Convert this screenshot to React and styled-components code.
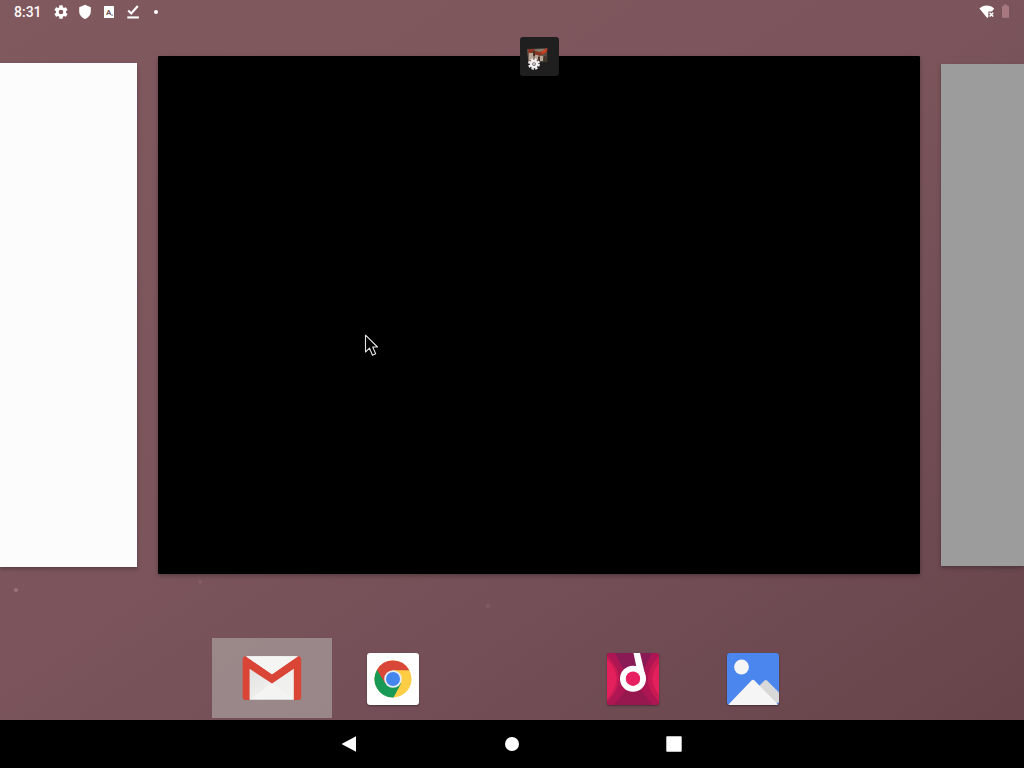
import React from 'react';
import styled, { createGlobalStyle } from 'styled-components';

const GlobalStyle = createGlobalStyle`
    * {
        box-sizing:border-box;
    }

    body {
        margin:0;
        overflow:hidden;
        font-family: Roboto, sans-serif;
    }

    svg {
        display:block;
        flex:none;
    }
`;

const Screen = styled.div`
    width:1024px;
    height:768px;
    display:flex;
    flex-direction:column;
    overflow:hidden;
    background:
        radial-gradient(circle at 16px 590px, rgba(160, 128, 136, 0.7) 0 1.5px, transparent 2.5px),
        radial-gradient(circle at 200px 582px, rgba(150, 115, 123, 0.4) 0 1px, transparent 2px),
        radial-gradient(circle at 488px 606px, rgba(150, 115, 123, 0.3) 0 1.5px, transparent 3px),
        linear-gradient(146deg, #80595f 0%, #7b555b 45%, #744f57 65%, #67434a 96%);
`;

const StatusBar = styled.div`
    height:24px;
    display:flex;
    align-items:center;
    justify-content:space-between;
    padding: 0 14px;
    color:#fff;
`;

const StatusGroup = styled.div`
    display:flex;
    align-items:center;
    gap: ${(props) => props.$gap}px;
`;

const Clock = styled.div`
    width:31px;
    font-size:14px;
    line-height:24px;
    font-weight:500;
    color:#fff7f8;
`;

const Recents = styled.div`
    height:614px;
    display:flex;
    align-items:flex-start;
    gap:21px;
`;

const TaskCard = styled.div`
    position:relative;
    flex:none;
    width: ${(props) => props.$width}px;
    height: ${(props) => props.$height}px;
    margin-top: ${(props) => props.$top}px;
    background-color: ${(props) => props.$color};
    border-radius: ${(props) => props.$radius || 0};
    box-shadow: 0 2px 4px rgba(0, 0, 0, 0.28);
`;

const TaskIcon = styled.div`
    position:absolute;
    top:-19px;
    left:362px;
    width:39px;
    height:39px;
    border-radius:3px;
    background-color:#1f1f1f;
`;

const Pointer = styled.div`
    position:absolute;
    left:206px;
    top:277px;
`;

const Dock = styled.div`
    height:82px;
    display:flex;
    justify-content:center;
    align-items:flex-start;
`;

const DockCell = styled.div`
    width:120px;
    height:80px;
    display:flex;
    align-items:center;
    justify-content:center;
    padding: 2px 0 0 ${(props) => (props.$active ? 0 : 1)}px;
    background-color: ${(props) => (props.$active ? 'rgba(190, 190, 186, 0.5)' : 'transparent')};
`;

const AppTile = styled.div`
    width:52px;
    height:52px;
    border-radius:3px;
    overflow:hidden;
    background-color: ${(props) => props.$color};
    box-shadow: 0 1px 2px rgba(0, 0, 0, 0.35);
`;

const NavBar = styled.div`
    height:48px;
    display:flex;
    align-items:center;
    justify-content:center;
    gap:146px;
    background-color:#000;
`;

function GearIcon() {
    return (
        <svg width="16" height="16" viewBox="0 0 24 24" fill="#fff">
            <path d="M19.4 13c.04-.3.06-.65.06-1s-.02-.7-.07-1l2.1-1.65c.2-.15.25-.4.12-.63l-2-3.46c-.12-.22-.38-.3-.6-.22l-2.5 1c-.52-.4-1.07-.73-1.68-.98l-.38-2.65A.5.5 0 0 0 14 2h-4c-.25 0-.45.18-.48.42l-.38 2.65c-.6.25-1.17.58-1.69.98l-2.49-1c-.23-.08-.48 0-.6.22l-2 3.46c-.13.22-.07.48.12.63L4.58 11a8 8 0 0 0 0 2l-2.1 1.65c-.2.15-.25.4-.12.63l2 3.46c.12.22.38.3.6.22l2.5-1c.51.4 1.08.73 1.68.98l.38 2.65c.03.24.23.42.48.42h4c.25 0 .45-.18.48-.42l.38-2.65c.6-.25 1.17-.58 1.69-.98l2.49 1c.23.08.48 0 .6-.22l2-3.46c.13-.22.07-.48-.12-.63zM12 15.5a3.5 3.5 0 1 1 0-7 3.5 3.5 0 0 1 0 7z" />
        </svg>
    );
}

function ShieldIcon() {
    return (
        <svg width="16" height="16" viewBox="0 0 16 16" fill="#fff">
            <path d="M8 .8L2.2 3.2v4.3c0 3.4 2.5 6.4 5.8 7.4 3.3-1 5.8-4 5.8-7.4V3.2z" />
        </svg>
    );
}

function LetterIcon() {
    return (
        <svg width="16" height="16" viewBox="0 0 16 16">
            <rect x="3" y="2" width="10" height="12" rx="0.6" fill="#fff" />
            <text x="7.8" y="11" textAnchor="middle" fontSize="8" fontWeight="700" fontFamily="Roboto, sans-serif" fill="#74525a">A</text>
            <rect x="10.5" y="10.6" width="1.2" height="1.2" fill="#74525a" />
        </svg>
    );
}

function CheckIcon() {
    return (
        <svg width="16" height="16" viewBox="0 0 16 16">
            <path d="M3.2 6.4l3 3L12.800 2" fill="none" stroke="#fff" strokeWidth="2.1" />
            <rect x="2.3" y="12.4" width="11.6" height="2.1" fill="#fff" />
        </svg>
    );
}

function WifiIcon() {
    return (
        <svg width="16" height="16" viewBox="0 0 16 16">
            <path d="M.4 4.6C2.4 2.600 5 1.600 7.800 1.600s5.400 1 7.400 3L13 7.400H9.400v5.500L8.200 14z" fill="#fff" />
            <path d="M10.600 8.800l3.600 3.800M14.200 8.800l-3.600 3.800" stroke="#fff" strokeWidth="1.500" />
        </svg>
    );
}

function BatteryIcon() {
    return (
        <svg width="9" height="16" viewBox="0 0 9 16" fill="#a87881">
            <path d="M3 .6h3v1.200h1.300q.7 0 .7.700v10.600q0 .7-.7.700H1.700q-.7 0-.7-.7V2.500q0-.7.700-.7H3z" />
        </svg>
    );
}

function TaskArtwork() {
    return (
        <svg width="39" height="39" viewBox="0 0 39 39">
            <defs>
                <linearGradient id="artwork" x1="0" y1="0" x2="1" y2="0.6">
                    <stop offset="0" stopColor="#5c4a44" />
                    <stop offset="0.55" stopColor="#8f7d6c" />
                    <stop offset="1" stopColor="#3a3a2e" />
                </linearGradient>
                <filter id="soft">
                    <feGaussianBlur stdDeviation="0.55" />
                </filter>
            </defs>
            <g filter="url(#soft)">
                <path d="M7 12l20-.5.500 13.500-19 1z" fill="url(#artwork)" />
                <path d="M8 12h6l1 2 4 1 5-1 4-3.500-1 4-3 3-5 1-5-1-5 1z" fill="#8c3422" />
                <path d="M9 16h4v7H9zM15 18h3v4h-3zM20 19h3v5h-3z" fill="#b9a79a" />
                <path d="M13 14h2v5h-2zM18 20h2v4h-2zM24 19h2v5h-2z" fill="#49342e" />
                <path d="M21 15l6-4-1 4-4 2z" fill="#cf4326" />
                <circle cx="14" cy="27" r="4.500" fill="none" stroke="#ece8e9" strokeWidth="2.800" strokeDasharray="2.200 1.334" />
                <circle cx="14" cy="27" r="3" fill="none" stroke="#f4eff0" strokeWidth="2.600" />
                <circle cx="14" cy="27" r="1.300" fill="#c4bcbd" />
            </g>
        </svg>
    );
}

function PointerIcon() {
    return (
        <svg width="16" height="24" viewBox="0 0 16 24">
            <path d="M1.500 2.200v16.800l4-3.800 3 7 3.200-1.400-3-6.800h4.800z" fill="#000" stroke="#e4e4e4" strokeWidth="1.100" strokeLinejoin="round" />
        </svg>
    );
}

function GmailIcon() {
    return (
        <svg width="60" height="48" viewBox="0 0 60 48">
            <defs>
                <linearGradient id="paper" x1="0" y1="0" x2="1" y2="1">
                    <stop offset="0" stopColor="#dcdcdb" />
                    <stop offset="0.6" stopColor="#efefee" />
                    <stop offset="1" stopColor="#f2f2f1" />
                </linearGradient>
            </defs>
            <path d="M4 1.500h52v43H4z" fill="url(#paper)" />
            <path d="M4 1.500h52L30 20z" fill="#f4f4f3" />
            <path d="M7.500 44.500L30 28.300 52 44.500z" fill="#f4f4f3" />
            <path d="M.6 4.500q0-3 3-3.200L30 19.300 56.200 1.300q3 .2 3 3.200v37.400q0 3-3 3h-4.400V13.800L30 28.500 7.600 13.800v31.100h-4q-3 0-3-3z" fill="#d94537" />
            <path d="M4.500 1.300h51L30 19.300z" fill="#f5f5f4" />
        </svg>
    );
}

function ChromeIcon() {
    return (
        <svg width="52" height="52" viewBox="0 0 52 52">
            <circle cx="26" cy="26" r="18.500" fill="#fccd45" />
            <path d="M26 26L10 16.700A18.500 18.500 0 0 0 26.500 44.500L34 30.600z" fill="#189a56" />
            <path d="M26 17.200H42.300A18.500 18.500 0 0 0 10 16.700L18.300 30.600 26 26z" fill="#d94738" />
            <circle cx="26" cy="26" r="8.800" fill="#e8eef8" />
            <circle cx="26" cy="26" r="7" fill="#4486ee" />
        </svg>
    );
}

function PodcastIcon() {
    return (
        <svg width="52" height="52" viewBox="0 0 52 52">
            <path d="M0 0h52v52H0z" fill="#ad1653" />
            <path d="M8 0h37L35 20H18z" fill="#8a1a55" />
            <path d="M7 52l12-15h15l12 15z" fill="#97184f" />
            <path d="M0 3q24 23 0 46zM52 3q-22 23 0 46z" fill="#c91a54" />
            <path d="M0 6q19 20 0 40zM52 10q-13 16 0 32z" fill="#e3205c" />
            <path d="M26.500 0h6.500L38.700 24 32 27z" fill="#fff" />
            <circle cx="26" cy="25.700" r="13" fill="#fff" />
            <circle cx="26" cy="25.700" r="7.200" fill="#e81f60" />
        </svg>
    );
}

function GalleryIcon() {
    return (
        <svg width="52" height="52" viewBox="0 0 52 52">
            <circle cx="14.500" cy="14" r="7.400" fill="#f5f5f5" />
            <path d="M28 37l9.300-9.300q1.500-1.400 3 0L52 39.500v10L38 52z" fill="#d8d8d8" />
            <path d="M1 52l23.500-24.500q1.500-1.500 3 0L51.500 52z" fill="#f5f5f5" />
        </svg>
    );
}

export default function App() {
    return (
        <Screen>
            <GlobalStyle />
            <StatusBar>
                <StatusGroup $gap={8}>
                    <Clock>8:31</Clock>
                    <GearIcon />
                    <ShieldIcon />
                    <LetterIcon />
                    <CheckIcon />
                    <svg width="14" height="16" viewBox="0 0 14 16">
                        <circle cx="7" cy="8" r="2" fill="#fff" />
                    </svg>
                </StatusGroup>
                <StatusGroup $gap={6}>
                    <WifiIcon />
                    <BatteryIcon />
                </StatusGroup>
            </StatusBar>
            <Recents>
                <TaskCard $width={137} $height={504} $top={39} $color="#fcfcfc" />
                <TaskCard $width={762} $height={518} $top={32} $color="#000" $radius="1px">
                    <TaskIcon>
                        <TaskArtwork />
                    </TaskIcon>
                    <Pointer>
                        <PointerIcon />
                    </Pointer>
                </TaskCard>
                <TaskCard $width={83} $height={502} $top={40} $color="#9c9c9c" />
            </Recents>
            <Dock>
                <DockCell $active>
                    <GmailIcon />
                </DockCell>
                <DockCell>
                    <AppTile $color="#fefefe">
                        <ChromeIcon />
                    </AppTile>
                </DockCell>
                <DockCell />
                <DockCell>
                    <AppTile $color="#ad1653">
                        <PodcastIcon />
                    </AppTile>
                </DockCell>
                <DockCell>
                    <AppTile $color="#4a86ee">
                        <GalleryIcon />
                    </AppTile>
                </DockCell>
            </Dock>
            <NavBar>
                <svg width="16" height="16" viewBox="0 0 16 16">
                    <path d="M-.400 8L14 .200v15.600z" fill="#fff" />
                </svg>
                <svg width="16" height="16" viewBox="0 0 16 16">
                    <circle cx="8" cy="8" r="7" fill="#fff" />
                </svg>
                <svg width="16" height="16" viewBox="0 0 16 16">
                    <rect x="0.300" y="0.300" width="15.400" height="15.400" rx="0.800" fill="#fff" />
                </svg>
            </NavBar>
        </Screen>
    );
}
